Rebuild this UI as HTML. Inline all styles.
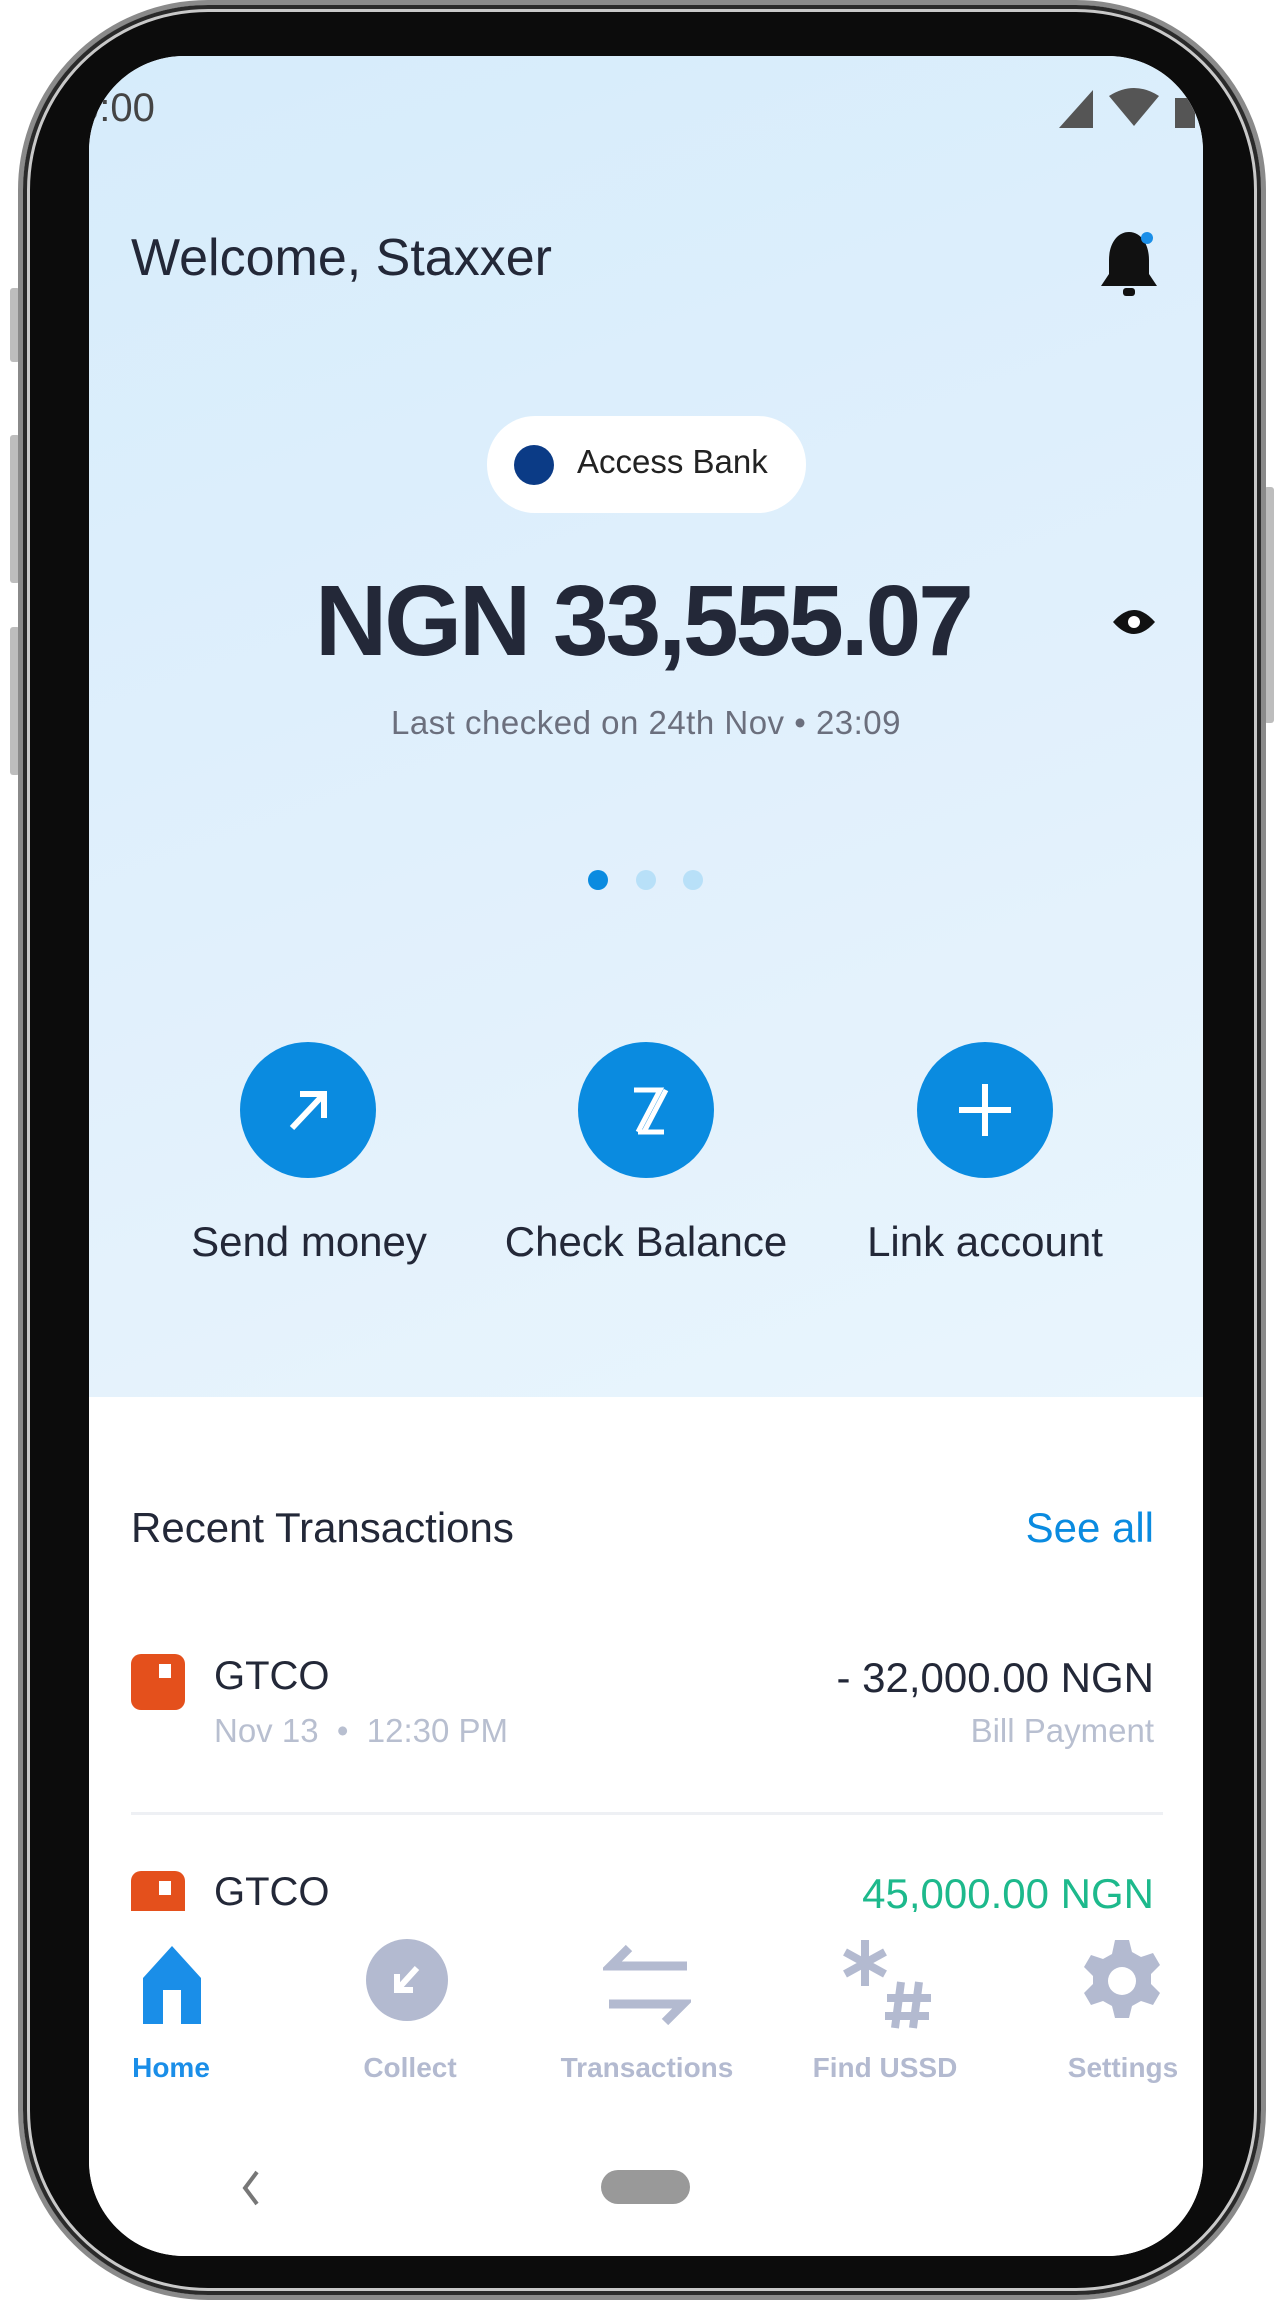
<!DOCTYPE html>
<html><head><meta charset="utf-8"><style>
*{margin:0;padding:0;box-sizing:border-box}
body{width:1280px;height:2312px;background:#fff;position:relative;overflow:hidden;font-family:"Liberation Sans",sans-serif;color:#232838}
.abs{position:absolute}
.frame{left:18px;top:0;width:1248px;height:2300px;border-radius:190px;background:#0c0c0c;border:5px solid #8a8a8a;box-shadow:inset 0 0 0 4px #2a2a2a,inset 0 0 0 7px #c9c9c9}
.screen{left:89px;top:56px;width:1114px;height:2200px;border-radius:95px;overflow:hidden;background:#fff}
.top{left:0;top:0;width:1114px;height:1341px;background:linear-gradient(160deg,#d6ecfb 0%,#e1f0fc 55%,#e9f5fd 100%)}
.btn{background:#bdbdbd;border-radius:3px}
.c{position:absolute;width:136px;height:136px;border-radius:50%;background:#0a8be0}
.lbl{position:absolute;width:340px;text-align:center;font-size:42px;color:#232838}
.nav{position:absolute;width:220px;text-align:center;font-size:28px;font-weight:bold;color:#b3bad0;top:1996px}
</style></head><body>
<div class="abs btn" style="left:10px;top:288px;width:10px;height:74px"></div>
<div class="abs btn" style="left:10px;top:435px;width:10px;height:148px"></div>
<div class="abs btn" style="left:10px;top:627px;width:10px;height:148px"></div>
<div class="abs btn" style="left:1264px;top:487px;width:10px;height:236px"></div>
<div class="abs frame"></div>
<div class="abs screen">
 <div class="abs top"></div>
 <div class="abs" style="left:-12px;top:30px;font-size:40px;color:#444">0:00</div>
 <svg class="abs" style="left:960px;top:28px" width="150" height="46" viewBox="0 0 150 46"><polygon points="10,44 44,6 44,44" fill="#555"/><path d="M60 12 Q85 -4 110 12 L85 42 Z" fill="#555"/><rect x="126" y="14" width="20" height="30" fill="#555"/></svg>
 <div class="abs" style="left:42px;top:172px;font-size:52px;color:#232838">Welcome, Staxxer</div>
 <svg class="abs" style="left:1008px;top:170px" width="64" height="78" viewBox="0 0 64 78"><path d="M32 6 C20 6 12 18 12 34 L12 48 L4 60 L60 60 L52 48 L52 34 C52 18 44 6 32 6Z" fill="#111"/><rect x="26" y="62" width="12" height="8" rx="3" fill="#111"/><circle cx="50" cy="12" r="6" fill="#1a8ee8"/></svg>
 <div class="abs" style="left:398px;top:360px;width:319px;height:97px;border-radius:48px;background:#fff"></div>
 <div class="abs" style="left:425px;top:389px;width:40px;height:40px;border-radius:50%;background:#0b3b86"></div>
 <div class="abs" style="left:488px;top:387px;font-size:33px;color:#222">Access Bank</div>
 <div class="abs" style="left:226px;top:508px;font-size:100px;font-weight:bold;color:#232838;letter-spacing:-3px">NGN 33,555.07</div>
 <svg class="abs" style="left:1022px;top:548px" width="46" height="36" viewBox="0 0 46 36"><path d="M2 18 Q23 -6 44 18 Q23 42 2 18Z" fill="#111"/><circle cx="23" cy="18" r="6" fill="#fff"/></svg>
 <div class="abs" style="left:0;width:1114px;top:648px;text-align:center;font-size:33px;color:#6b6f7d;letter-spacing:0.5px">Last checked on 24th Nov • 23:09</div>
 <div class="abs" style="left:499px;top:814px;width:20px;height:20px;border-radius:50%;background:#0a8be0"></div>
 <div class="abs" style="left:547px;top:814px;width:20px;height:20px;border-radius:50%;background:#b8e0f8"></div>
 <div class="abs" style="left:594px;top:814px;width:20px;height:20px;border-radius:50%;background:#b8e0f8"></div>
 <div class="c" style="left:151px;top:986px"><svg width="136" height="136"><path d="M52 86 L84 52 M60 52 L84 52 L84 76" stroke="#fff" stroke-width="6" fill="none"/></svg></div>
 <div class="c" style="left:489px;top:986px"><svg width="136" height="136"><path d="M56 48 L82 48 L60 90 M66 90 L88 48 M60 90 L86 90" stroke="#fff" stroke-width="5" fill="none"/></svg></div>
 <div class="c" style="left:828px;top:986px"><svg width="136" height="136"><path d="M68 42 V94 M42 68 H94" stroke="#fff" stroke-width="6" fill="none"/></svg></div>
 <div class="lbl" style="left:50px;top:1162px">Send money</div>
 <div class="lbl" style="left:387px;top:1162px">Check Balance</div>
 <div class="lbl" style="left:726px;top:1162px">Link account</div>
 <div class="abs" style="left:42px;top:1448px;font-size:42px;color:#232838">Recent Transactions</div>
 <div class="abs" style="right:49px;top:1448px;font-size:42px;color:#0a8be0">See all</div>
 <div class="abs" style="left:42px;top:1598px;width:54px;height:56px;border-radius:10px;background:#e4501c"><div style="position:absolute;left:28px;top:10px;width:12px;height:14px;background:#fff"></div></div>
 <div class="abs" style="left:125px;top:1598px;font-size:40px;color:#232838">GTCO</div>
 <div class="abs" style="left:125px;top:1656px;font-size:33px;color:#b8bfd0">Nov 13 &nbsp;• &nbsp;12:30 PM</div>
 <div class="abs" style="right:49px;top:1598px;font-size:42px;color:#232838">- 32,000.00 NGN</div>
 <div class="abs" style="right:49px;top:1656px;font-size:33px;color:#b8bfd0">Bill Payment</div>
 <div class="abs" style="left:42px;top:1756px;width:1032px;height:3px;background:#eef0f4"></div>
 <div class="abs" style="left:42px;top:1815px;width:54px;height:40px;border-radius:10px 10px 0 0;background:#e4501c;overflow:hidden"><div style="position:absolute;left:28px;top:10px;width:12px;height:14px;background:#fff"></div></div>
 <div class="abs" style="left:125px;top:1814px;font-size:40px;color:#232838;height:42px;overflow:hidden">GTCO</div>
 <div class="abs" style="right:49px;top:1814px;font-size:42px;color:#1db98c">45,000.00 NGN</div>
 <div class="abs" style="left:0;top:1856px;width:1114px;height:360px;background:#fff"></div>
 <svg class="abs" style="left:50px;top:1888px" width="66" height="82" viewBox="0 0 66 82"><path d="M33 2 L62 34 L62 80 L4 80 L4 34 Z" fill="#1a8ee8"/><rect x="24" y="46" width="18" height="34" fill="#fff"/></svg>
 <svg class="abs" style="left:276px;top:1882px" width="84" height="84"><circle cx="42" cy="42" r="41" fill="#b3bad0"/><path d="M52 30 L32 52 M32 36 V52 H48" stroke="#fff" stroke-width="6" fill="none"/></svg>
 <svg class="abs" style="left:514px;top:1888px" width="88" height="82"><path d="M26 4 L8 22 H84 M62 78 L80 60 H6" stroke="#b3bad0" stroke-width="9" fill="none"/></svg>
 <svg class="abs" style="left:750px;top:1880px" width="96" height="100"><g stroke="#b3bad0" stroke-width="8"><path d="M26 4 V50 M6 16 L46 38 M46 16 L6 38"/><path d="M62 46 L56 92 M80 46 L74 92 M48 62 H92 M46 80 H90"/></g></svg>
 <svg class="abs" style="left:990px;top:1882px" width="86" height="86" viewBox="0 0 86 86"><path d="M36 2h14l3 12 9 5 12-4 7 12-9 9v10l9 9-7 12-12-4-9 5-3 12H36l-3-12-9-5-12 4-7-12 9-9V38L5 29l7-12 12 4 9-5z" fill="#b3bad0"/><circle cx="43" cy="43" r="14" fill="#fff"/></svg>
 <div class="nav" style="left:-28px;color:#1a8ee8">Home</div>
 <div class="nav" style="left:211px">Collect</div>
 <div class="nav" style="left:448px">Transactions</div>
 <div class="nav" style="left:686px">Find USSD</div>
 <div class="nav" style="left:924px">Settings</div>
 <svg class="abs" style="left:150px;top:2112px" width="24" height="40"><path d="M18 4 L6 20 L18 36" stroke="#777" stroke-width="4" fill="none"/></svg>
 <div class="abs" style="left:512px;top:2114px;width:89px;height:34px;border-radius:17px;background:#999"></div>
</div>
</body></html>
